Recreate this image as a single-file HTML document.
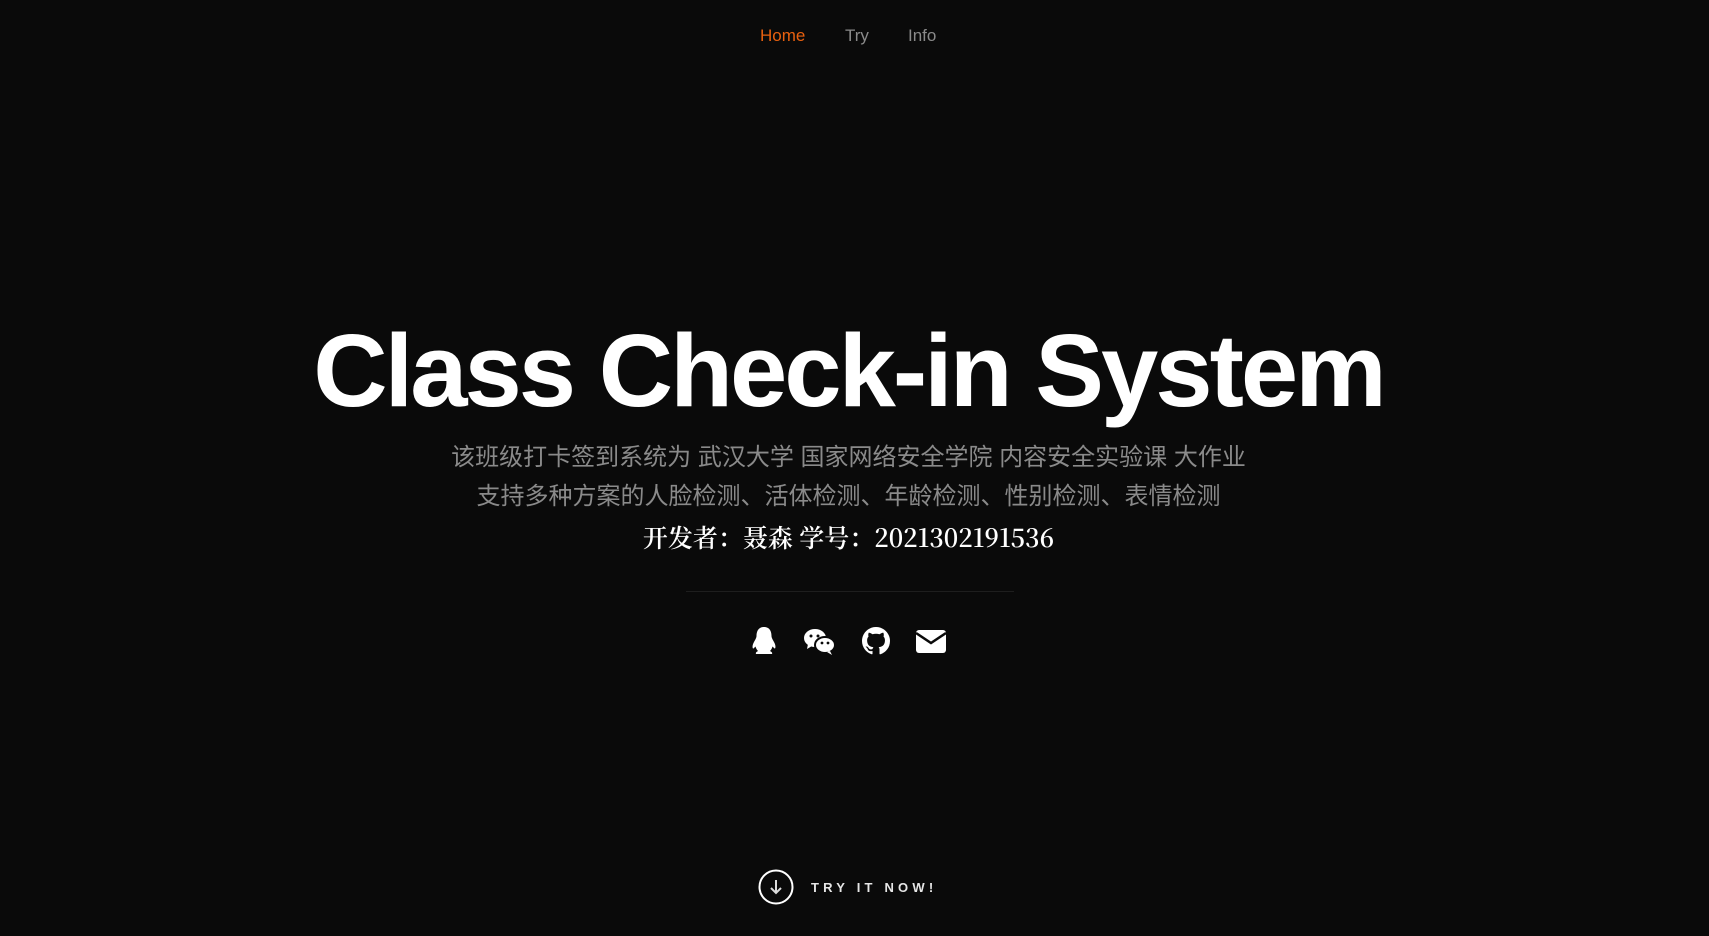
<!DOCTYPE html>
<html><head><meta charset="utf-8"><style>
html,body{margin:0;padding:0;background:#0a0a0a;width:1709px;height:936px;overflow:hidden;font-family:"Liberation Sans",sans-serif}
.nav{position:absolute;top:26px;left:0;width:1709px;height:22px;font-size:17px}
.nav span{position:absolute;top:0;color:#8a8a8a}
h1{position:absolute;left:0;width:1697px;top:316px;margin:0;text-align:center;color:#fff;font-size:103px;font-weight:bold;letter-spacing:-3px;line-height:110px;white-space:nowrap}
.l{position:absolute;left:0;width:1697px;text-align:center;font-size:24px;line-height:30px;font-family:"Liberation Sans","Noto Sans CJK SC",sans-serif;color:#8a8a8a;white-space:pre}
.w{color:#fff;font-family:"Noto Serif CJK SC","Liberation Serif",serif;font-size:25px;font-weight:600}
.hr{position:absolute;left:686px;top:591px;width:328px;height:1px;background:#1e1e1e}
svg{position:absolute}
.try{position:absolute;left:811px;top:880px;color:#e6e6e6;font-size:13px;font-weight:bold;letter-spacing:4.2px}
</style></head><body>
<div class="nav"><span style="left:760px;color:#e8600f">Home</span><span style="left:845px">Try</span><span style="left:908px">Info</span></div>
<h1>Class Check-in System</h1>
<div class="l" style="top:443px">该班级打卡签到系统为 武汉大学 国家网络安全学院 内容安全实验课 大作业</div>
<div class="l" style="top:482px">支持多种方案的人脸检测、活体检测、年龄检测、性别检测、表情检测</div>
<div class="l w" style="top:522px">开发者：聂森 学号：2021302191536</div>
<div class="hr"></div>
<svg style="left:751px;top:626px" width="26" height="30" viewBox="0 0 26 30"><path fill="#fff" d="M13 1C7 1 5.5 6 5.5 10c0 2-1.5 4-3 7-1.5 3-1 6 0 5.5l2-2c.5 2 1.5 3.5 2.5 4.5-2 1-2.5 2-2 3h16c.5-1-0-2-2-3 1-1 2-2.5 2.5-4.5l2 2c1 .5 1.5-2.5 0-5.5-1.5-3-3-5-3-7C20.5 6 19 1 13 1z"/></svg>
<svg style="left:803px;top:628px" width="34" height="28" viewBox="0 0 34 28"><ellipse cx="12" cy="10" rx="11" ry="9" fill="#fff"/><path d="M5 16l-1 5 5-3z" fill="#fff"/><ellipse cx="22" cy="17" rx="10" ry="8" stroke="#0a0a0a" stroke-width="2" fill="#fff"/><path d="M27 23l2 4-5-3z" fill="#fff"/><circle cx="8" cy="8" r="1.5" fill="#0a0a0a"/><circle cx="15" cy="8" r="1.5" fill="#0a0a0a"/><circle cx="19" cy="15" r="1.4" fill="#0a0a0a"/><circle cx="25" cy="15" r="1.4" fill="#0a0a0a"/></svg>
<svg style="left:862px;top:627px" width="28" height="28" viewBox="0 0 16 16"><path fill="#fff" d="M8 0C3.58 0 0 3.58 0 8c0 3.54 2.29 6.53 5.470 7.590.4.07.55-.17.55-.38 0-.19-.01-.82-.01-1.49-2.010.37-2.530-.49-2.690-.94-.09-.23-.48-.94-.82-1.130-.28-.15-.68-.52-.01-.53.63-.01 1.08.58 1.23.82.72 1.21 1.870.87 2.33.66.07-.52.28-.87.51-1.07-1.78-.2-3.64-.89-3.64-3.95 0-.87.31-1.59.82-2.15-.08-.2-.36-1.02.08-2.12 0 0 .67-.21 2.2.82.64-.18 1.32-.27 2-.27.68 0 1.36.09 2 .27 1.53-1.04 2.2-.82 2.2-.82.44 1.1.16 1.92.08 2.12.51.56.82 1.27.82 2.15 0 3.07-1.87 3.75-3.65 3.95.29.25.54.73.54 1.48 0 1.07-.01 1.93-.01 2.2 0 .21.15.46.55.38A8.013 8.013 0 0016 8c0-4.42-3.58-8-8-8z"/></svg>
<svg style="left:916px;top:630px" width="30" height="23" viewBox="0 0 30 23"><rect x="0" y="0" width="30" height="23" rx="3" fill="#fff"/><path d="M0 3l15 10L30 3" stroke="#0a0a0a" stroke-width="2.5" fill="none"/></svg>
<svg style="left:758px;top:869px" width="36" height="36" viewBox="0 0 36 36"><circle cx="18" cy="18" r="16.5" stroke="#fff" stroke-width="2" fill="none"/><path d="M18 11v13M13 19l5 5 5-5" stroke="#ddd" stroke-width="2" fill="none"/></svg>
<div class="try">TRY IT NOW!</div>
</body></html>
